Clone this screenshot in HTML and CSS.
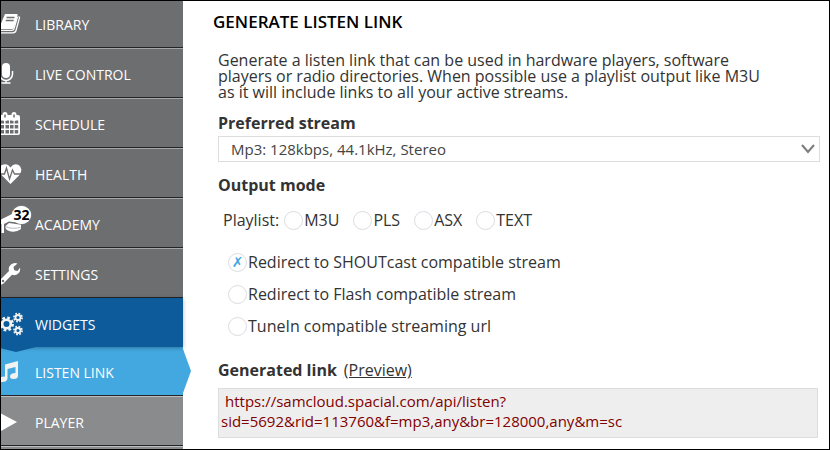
FILE: index.html
```
<!DOCTYPE html>
<html lang="en">
<head>
  <meta charset="UTF-8">
  <meta name="viewport" content="width=device-width, initial-scale=1.0">
  <title>Generate Listen Link</title>
  <link rel="stylesheet" href="styles.css">
</head>
<body>
  <div class="app">
    <nav class="sidebar">
      <a class="nav-item" href="#library">
        <svg class="nav-icon" viewBox="1 1 34 48" aria-hidden="true">
          <path d="M5 16h11.500q1.500 0 1 1.500l-3.500 12q-.4 1.500-2 1.500H0V28z" fill="#fff"/>
          <path d="M18.500 18.500q1.300.4.9 1.700L16 32.500q-.6 2.300-3 2.300H0M0 32.300h12q1.500 0 2-1.500l3.500-12" fill="none" stroke="#fff" stroke-width="1.300"/>
          <path d="M6.500 19.500h8M5.700 22.500h8" stroke="#6d6e70" stroke-width="1.300"/>
        </svg>
        <span>LIBRARY</span>
      </a>
      <a class="nav-item" href="#live">
        <svg class="nav-icon" viewBox="1 1 34 48" aria-hidden="true">
          <rect x="2" y="15" width="8" height="15" rx="4" fill="#fff"/>
          <path d="M-.5 23v3a6.500 6.500 0 0 0 13 0v-3M6 32v3M1.500 35h9" fill="none" stroke="#fff" stroke-width="1.500"/>
        </svg>
        <span>LIVE CONTROL</span>
      </a>
      <a class="nav-item" href="#schedule">
        <svg class="nav-icon" viewBox="1 1 34 48" aria-hidden="true">
          <path d="M0 17h18q2 0 2 2v16q0 2-2 2H0z" fill="#fff"/>
          <path d="M0 22.500h4v3H0zM5.500 22.500h3.500v3H5.500zM10 22.500h3.500v3H10zM14.700 22.500h3.500v3h-3.500zM0 27h4v3.500H0zM5.500 27h3.500v3.500H5.500zM10 27h3.500v3.500H10zM14.700 27h3.500v3.500h-3.500zM0 32h4v3.500H0zM5.500 32h3.500v3.500H5.500zM10 32h3.500v3.500H10zM14.700 32h3.500v3.500h-3.500z" fill="#6d6e70"/>
          <path d="M5 16.500v4M14 16.500v4" stroke="#fff" stroke-width="5" stroke-linecap="round"/>
          <path d="M5 16.500v3M14 16.500v3" stroke="#6d6e70" stroke-width="1.500"/>
        </svg>
        <span>SCHEDULE</span>
      </a>
      <a class="nav-item" href="#health">
        <svg class="nav-icon" viewBox="1 1 34 48" aria-hidden="true">
          <path d="M10.500 36L1.500 27Q-3 20 1.500 17.200 7 14.300 10.500 19.500 14 14.300 19 17.200 23.500 21 19.500 27z" fill="#fff"/>
          <path d="M0 26h4.500l2-6 3 11 3-9 2 4H21" fill="none" stroke="#6d6e70" stroke-width="1.300"/>
        </svg>
        <span>HEALTH</span>
      </a>
      <a class="nav-item" href="#academy">
        <svg class="nav-icon" viewBox="1 1 34 48" aria-hidden="true">
          <path d="M0 22l12-6 13 5-4 4-12-1.500L4 26v9H1.500v-9H0z" fill="#fff"/>
          <path d="M5.500 28L9 25l12 1.700V31q-6 4.500-13 1.500-3-1.500-2.500-4.500z" fill="#fff"/>
          <path d="M5.500 28.500q6 3 15 1" fill="none" stroke="#a5a6a8" stroke-width=".8"/>
        </svg>
        <span class="badge">32</span>
        <span>ACADEMY</span>
      </a>
      <a class="nav-item" href="#settings">
        <svg class="nav-icon" viewBox="1 1 34 48" aria-hidden="true">
          <path d="M0 32l9-9q-1-4 2-6.500 3-2.500 6.500-1L13.500 19l.7 3.300 3.300.7 2.500-3.200q.8 3.700-2 6-2.500 2-6 1l-8.500 8.700Q2 37 0 36.500z" fill="#fff"/>
          <circle cx="3" cy="33" r="1.200" fill="#6d6e70"/>
        </svg>
        <span>SETTINGS</span>
      </a>
      <a class="nav-item nav-open" href="#widgets">
        <svg class="nav-icon" viewBox="1 1 34 48" aria-hidden="true">
          <g fill="none" stroke="#f2f2f2">
            <circle cx="6.500" cy="26" r="4.300" stroke-width="2.600"/>
            <circle cx="6.500" cy="26" r="6.200" stroke-width="2.600" stroke-dasharray="2.600 2.270"/>
            <circle cx="18" cy="19.500" r="2.500" stroke-width="1.800"/>
            <circle cx="18" cy="19.500" r="4" stroke-width="1.800" stroke-dasharray="1.700 1.440"/>
            <circle cx="18" cy="32.500" r="2.500" stroke-width="1.800"/>
            <circle cx="18" cy="32.500" r="4" stroke-width="1.800" stroke-dasharray="1.700 1.440"/>
          </g>
        </svg>
        <span>WIDGETS</span>
      </a>
      <a class="nav-item nav-current" href="#listen-link" aria-current="page">
        <svg class="nav-icon" viewBox="1 1 34 48" aria-hidden="true">
          <path d="M5 18.500L18 15v14.500q0 3.500-4.500 3.500-3.500 0-3.500-2.500 0-3.500 5.500-3.500v-6L7.500 23v9.500Q7 36 2 36q-3 0-3-2.500Q-1 30.500 5 30.500z" fill="#f2f2f2"/>
        </svg>
        <span>LISTEN LINK</span>
      </a>
      <a class="nav-item nav-sub" href="#player">
        <svg class="nav-icon" viewBox="1 1 34 48" aria-hidden="true">
          <path d="M0 17L17 26 0 35.500z" fill="#fff"/>
        </svg>
        <span>PLAYER</span>
      </a>
      <a class="nav-item nav-sub" href="#more" aria-label="More widgets"></a>
    </nav>

    <main class="content">
      <h1>GENERATE LISTEN LINK</h1>
      <form class="listen-form">
        <p class="intro">Generate a listen link that can be used in hardware players, software players or radio directories. When possible use a playlist output like M3U as it will include links to all your active streams.</p>

        <label class="title" for="stream">Preferred stream</label>
        <div class="select-wrap">
          <select id="stream">
            <option>Mp3: 128kbps, 44.1kHz, Stereo</option>
          </select>
          <svg class="chevron" viewBox="0 0 14 10" aria-hidden="true">
            <path d="M1 1l6 7 6-7" fill="none" stroke="#7b7b7b" stroke-width="2"/>
          </svg>
        </div>

        <h2 class="title">Output mode</h2>
        <div class="playlist">
          <span>Playlist:</span>
          <label><input type="radio" name="mode">M3U</label>
          <label><input type="radio" name="mode">PLS</label>
          <label><input type="radio" name="mode">ASX</label>
          <label><input type="radio" name="mode">TEXT</label>
        </div>
        <div class="redirects">
          <label><input type="radio" name="mode" checked>Redirect to SHOUTcast compatible stream</label>
          <label><input type="radio" name="mode">Redirect to Flash compatible stream</label>
          <label><input type="radio" name="mode">TuneIn compatible streaming url</label>
        </div>

        <div class="link-head">
          <h2 class="title">Generated link</h2>
          <a href="#preview">(Preview)</a>
        </div>
        <div class="link-box">https://samcloud.spacial.com/api/listen?<br>sid=5692&amp;rid=113760&amp;f=mp3,any&amp;br=128000,any&amp;m=sc</div>
      </form>
    </main>
  </div>
</body>
</html>
```
FILE: styles.css
```
* {
  box-sizing: border-box;
}

body {
  margin: 0;
  font-family: "Open Sans", "Noto Sans", sans-serif;
  font-size: 16px;
  line-height: 20px;
  color: #333;
  background: #fff;
}

.app {
  display: flex;
  height: 100vh;
  border: 1px solid #000;
  overflow: hidden;
}

/* Sidebar */
.sidebar {
  flex: 0 0 182px;
  margin-top: -3px;
}

.nav-item {
  position: relative;
  display: flex;
  align-items: center;
  height: 50px;
  border-top: 1px solid #a5a6a8;
  border-bottom: 1px solid #242426;
  background: #6d6e70;
  color: #fff;
  font-size: 14px;
  text-decoration: none;
}

.nav-item span {
  padding-top: 3px;
}

.nav-icon {
  flex: none;
  width: 34px;
  height: 48px;
}

.nav-item .badge {
  position: absolute;
  left: 11px;
  top: 7px;
  width: 19px;
  height: 18px;
  padding: 0;
  border-radius: 50%;
  background: #fff;
  box-shadow: 0 0 1px #fff;
  color: #000;
  font-size: 14px;
  font-weight: 700;
  line-height: 18px;
  display: flex;
  justify-content: center;
}

.nav-open {
  z-index: 1;
  height: 49px;
  border-top-color: #0d5b9b;
  border-bottom: none;
  background: #0d5b9b;
  box-shadow: 0 1px 4px rgba(0, 0, 0, 0.3);
}

.nav-open::after {
  content: "";
  position: absolute;
  left: -5px;
  top: 100%;
  width: 40px;
  height: 5px;
  background: #0d5b9b;
  clip-path: polygon(0 0, 100% 0, 50% 100%);
}

.nav-current {
  height: 49px;
  border-top: none;
  background: #43a8e0;
}

.nav-current::after {
  content: "";
  position: absolute;
  left: 100%;
  top: 2px;
  width: 8px;
  height: 44px;
  background: #43a8e0;
  clip-path: polygon(0 0, 100% 50%, 0 100%);
}

.nav-sub {
  border-top-color: #bdbec0;
  background: #8a8b8d;
}

/* Content */
.content {
  flex: 1;
  padding: 11px 9px 0 30px;
}

h1 {
  margin: 0;
  font-size: 17px;
  font-weight: 600;
  color: #000;
}

.listen-form {
  padding: 20px 0 0 5px;
}

.intro {
  max-width: 550px;
  margin: 0 0 13px;
  line-height: 16px;
}

.title {
  display: block;
  margin: 0;
  font-size: 16px;
  font-weight: 700;
}

.select-wrap {
  position: relative;
  margin: 3px 0 13px;
}

select {
  display: block;
  width: 100%;
  height: 26px;
  padding: 0 12px;
  border: 1px solid #ddd;
  border-radius: 0;
  background: #fff;
  color: #444;
  font: 15px "Open Sans", "Noto Sans", sans-serif;
  appearance: none;
}

.chevron {
  position: absolute;
  right: 5px;
  top: 8px;
  width: 14px;
  height: 10px;
  pointer-events: none;
}

label {
  display: flex;
  align-items: center;
}

input[type="radio"] {
  display: grid;
  place-items: center;
  flex: none;
  width: 19px;
  height: 19px;
  margin: 0 1px 0 0;
  border: 1px solid #dcdde2;
  border-radius: 50%;
  background: #fff;
  appearance: none;
}

input[type="radio"]:checked::before {
  content: "✗";
  font: 14px/14px "DejaVu Sans", sans-serif;
  color: #43a8e0;
}

.playlist {
  display: flex;
  gap: 14px;
  padding: 15px 5px 22px;
}

.playlist span {
  margin-right: -9px;
}

.redirects {
  display: grid;
  gap: 12px;
  padding: 0 10px 24px;
}

.link-head {
  display: flex;
  gap: 7px;
}

.link-head a {
  color: #333;
}

.link-box {
  margin: 8px 2px 0 0;
  padding: 2px 2px 6px;
  border: 1px solid #ddd;
  background: #eee;
  color: #800000;
  font-size: 15px;
  text-indent: 4px;
}
```
